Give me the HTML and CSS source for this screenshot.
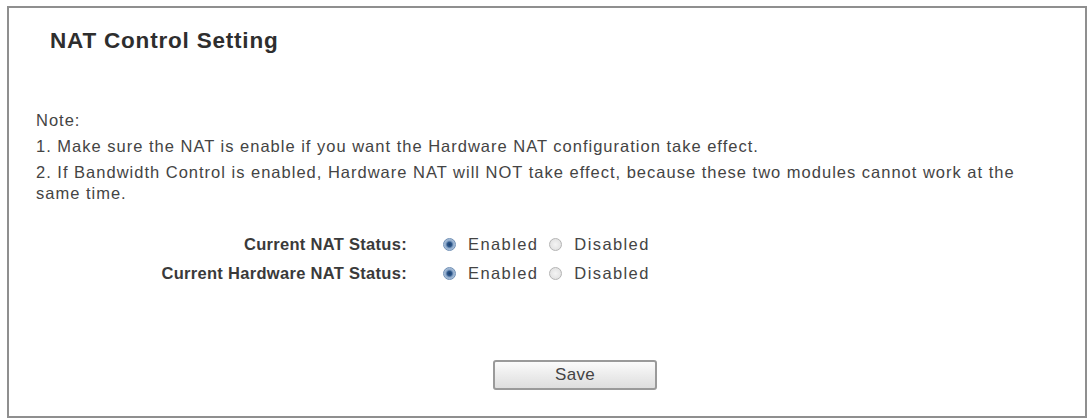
FILE: index.html
```html
<!DOCTYPE html>
<html lang="en">
<head>
  <meta charset="UTF-8" />
  <title>NAT Control Setting</title>
  <link rel="stylesheet" href="styles.css">
</head>
<body>

<form class="panel" action="#" method="get">
  <h1>NAT Control Setting</h1>

  <div class="notes">
    <p>Note:</p>
    <p>1. Make sure the NAT is enable if you want the Hardware NAT configuration take effect.</p>
    <p>2. If Bandwidth Control is enabled, Hardware NAT will NOT take effect, because these two modules cannot work at the same time.</p>
  </div>

  <div class="rows">
    <div class="row">
      <span class="row-label">Current NAT Status:</span>
      <label class="opt"><input type="radio" name="nat" checked /> Enabled</label>
      <label class="opt"><input type="radio" name="nat" /> Disabled</label>
    </div>
    <div class="row">
      <span class="row-label">Current Hardware NAT Status:</span>
      <label class="opt"><input type="radio" name="hwnat" checked /> Enabled</label>
      <label class="opt"><input type="radio" name="hwnat" /> Disabled</label>
    </div>
  </div>

  <div class="actions">
    <button type="submit" class="save-btn">Save</button>
  </div>
</form>

</body>
</html>
```

FILE: styles.css
```css
body { margin: 0; padding: 6px 5px 2px 7px; font-family: "Liberation Sans", Arial, sans-serif; color: #444; background: #fff; }
.panel {
  border: 2px solid #8f8f8f; height: 412px; box-sizing: border-box;
  padding: 0 45px 0 27px;
}
h1 { font-size: 22.5px; line-height: 26px; font-weight: bold; color: #2e2e2e; margin: 20px 0 0 14px; letter-spacing: 0.8px; }
.notes { margin-top: 56px; font-size: 16.5px; letter-spacing: 1px; }
.notes p { margin: 0 0 5px; line-height: 21px; }
.notes p:last-child { margin-bottom: 0; }
.rows { margin-top: 26px; }
.row { display: flex; align-items: center; height: 29px; font-size: 16.5px; }
.row-label { width: 371px; text-align: right; font-weight: bold; color: #3a3a3a; padding-right: 36px; letter-spacing: 0.3px; }
.opt { display: flex; align-items: center; margin-right: 11px; letter-spacing: 1.4px; }
.opt input {
  appearance: none; width: 13px; height: 13px; margin: 0 12px 0 0; border-radius: 50%;
  border: 1px solid #b4b4b4; background: radial-gradient(circle, #f4f4f4 0, #dcdcdc 100%);
  box-sizing: border-box;
}
.opt input:checked {
  border-color: #6f8fb5;
  background: radial-gradient(circle, #1e3f6a 0, #2b5589 28%, #8eaacb 50%, #d5e0ed 100%);
}
.actions { display: flex; margin-top: 72px; padding-left: 457px; }
.save-btn {
  width: 164px; height: 30px; font-family: inherit; font-size: 17px; color: #444;
  border: 2px solid #9a9a9a; border-radius: 3px; letter-spacing: 0.3px;
  background: linear-gradient(#fbfbfb, #ececec 50%, #dedede); cursor: pointer;
}
```
